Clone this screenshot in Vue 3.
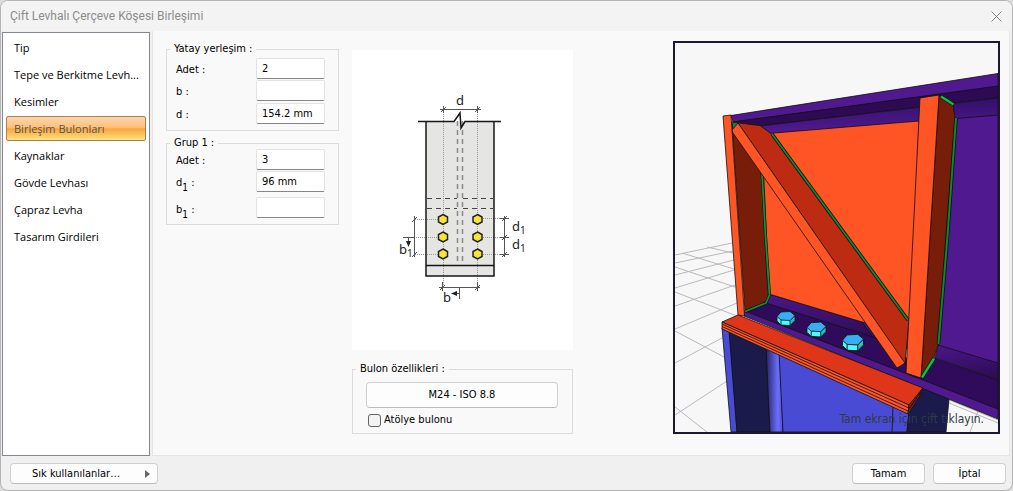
<script setup>
import { ref } from 'vue'

const pages = [
  'Tip',
  'Tepe ve Berkitme Levh...',
  'Kesimler',
  'Birleşim Bulonları',
  'Kaynaklar',
  'Gövde Levhası',
  'Çapraz Levha',
  'Tasarım Girdileri',
]
const current = ref(3)
const layout = ref({ count: '2', b: '', d: '154.2 mm' })
const group = ref({ count: '3', d1: '96 mm', b1: '' })
const shopBolt = ref(false)
const boltRows = [219.5, 237, 254]
const bolts = [[786, 318, 1], [816.5, 329, 1.06], [853, 342, 1.18]]
</script>

<template>
  <main class="dialog">
    <header class="titlebar">
      <h1>Çift Levhalı Çerçeve Köşesi Birleşimi</h1>
      <button class="close" type="button" aria-label="Kapat">
        <svg width="11" height="11" viewBox="0 0 11 11"><path d="M.5 .5L10.500 10.500M10.500 .5L.5 10.500" stroke="#858585" fill="none" /></svg>
      </button>
    </header>

    <div class="body">
      <nav class="pages">
        <button v-for="(p, i) in pages" :key="p" type="button" :class="{ active: i === current }" @click="current = i">{{ p }}</button>
      </nav>

      <section class="content">
        <div class="forms">
          <fieldset>
            <legend>Yatay yerleşim :</legend>
            <div class="row"><label for="h-count">Adet :</label><input id="h-count" v-model="layout.count" type="text" /></div>
            <div class="row"><label for="h-b">b :</label><input id="h-b" v-model="layout.b" type="text" /></div>
            <div class="row"><label for="h-d">d :</label><input id="h-d" v-model="layout.d" type="text" /></div>
          </fieldset>
          <fieldset class="group">
            <legend>Grup 1 :</legend>
            <div class="row"><label for="g-count">Adet :</label><input id="g-count" v-model="group.count" type="text" /></div>
            <div class="row"><label for="g-d1">d<sub>1</sub> :</label><input id="g-d1" v-model="group.d1" type="text" /></div>
            <div class="row"><label for="g-b1">b<sub>1</sub> :</label><input id="g-b1" v-model="group.b1" type="text" /></div>
          </fieldset>
        </div>

        <div class="middle">
          <svg class="diagram" viewBox="352 50 221 300">
            <rect x="426" y="122" width="68" height="154" fill="#e5e5e4" />
            <g fill="none" stroke="#999" stroke-dasharray="1 1">
              <path d="M443.500 112V286M477.500 112V286M415 219.500H440M408 237.500H440M415 254.500H440M481 218.500H502M481 237.500H502M481 254.500H502" />
            </g>
            <g fill="none" stroke="#888" stroke-dasharray="5 4">
              <path d="M457.500 121V265M462.500 121V265" stroke-width="1.500" />
              <path d="M427 198.500H457M463 198.500H493M427 208.500H457M463 208.500H493" stroke="#444" />
            </g>
            <g fill="none" stroke="#161616" stroke-width="1.500">
              <path d="M426 122V276H494V122M426 265.500H494" />
              <path d="M418 121.500H454L460 113L461 128L465 121.500H501" />
            </g>
            <g fill="none" stroke="#555">
              <path d="M440 109.500H481M443.500 106V113M477.500 106V113M441 112L446 107M475 112L480 107" />
              <path d="M442.500 282V291M477.500 282V291M439 287.500H480M440 290L445 285M475 290L480 285M459.500 287V299M452 293.500H460" />
              <path d="M414.500 216V257M412 222L417 217M412 257L417 252M403 237.500H414M408.500 238V243" />
              <path d="M504.500 216V257M502 221L507 216M502 240L507 235M502 257L507 252M500 218.500H509M500 237.500H509M500 254.500H509" />
            </g>
            <path d="M451 293.500L457 291V296ZM408.500 247L406 241H411Z" fill="#222" />
            <g fill="#fbe338" stroke="#222" stroke-width="1.500">
              <template v-for="y in boltRows" :key="y">
                <path v-for="x in [443, 477.5]" :key="x" :d="`M${x} ${y - 5}l4.500 2.500v5l-4.500 2.500l-4.500-2.500v-5z`" />
              </template>
            </g>
            <g class="dims">
              <text x="456" y="105">d</text>
              <text x="443" y="302">b</text>
              <text x="399" y="254">b<tspan class="small" dy="3">1</tspan></text>
              <text x="512" y="231">d<tspan class="small" dy="3">1</tspan></text>
              <text x="512" y="249">d<tspan class="small" dy="3">1</tspan></text>
            </g>
          </svg>

          <fieldset class="bolt">
            <legend>Bulon özellikleri :</legend>
            <button type="button">M24 - ISO 8.8</button>
            <label class="check"><input v-model="shopBolt" type="checkbox" />Atölye bulonu</label>
          </fieldset>
        </div>

        <figure class="scene">
          <svg viewBox="675 43 323 389" preserveAspectRatio="xMidYMid slice">
            <defs>
              <linearGradient id="flange" x1="0" y1="0" x2="0" y2="1"><stop offset="0" stop-color="#32106a" /><stop offset="1" stop-color="#511a92" /></linearGradient>
              <linearGradient id="fillet" x1="0" y1="0" x2="0.3" y2="1"><stop offset="0" stop-color="#4b178a" /><stop offset="1" stop-color="#300d5a" /></linearGradient>
              <linearGradient id="column"><stop offset="0" stop-color="#232365" /><stop offset=".7" stop-color="#6d6eff" /><stop offset="1" stop-color="#4b4bd4" /></linearGradient>
            </defs>
            <rect x="675" y="43" width="323" height="389" fill="#f7f7f7" />
            <g fill="none" stroke="#b9b9b9">
              <path d="M675 255L732 243M675 263L733 251M675 275L734 260M675 288L734 270M675 306L735 285M675 329L737 303M675 363L722 338M675 415L727 381" />
              <path d="M682 253L734 269M675 267L735 287M675 292L737 316M675 331L724 357M675 407L707 432M707 247L733 253" />
              <path d="M949 400L998 420M949 403L998 423M978 411L970 432" />
            </g>
            <g stroke="#101010" stroke-width=".8" stroke-linejoin="round">
              <path d="M722 328L730 332L737 432H731Z" fill="#4a4bd5" />
              <path d="M729 331L767 349L770 432H737Z" fill="#1a1a4b" />
              <path d="M766 347L780 354L783 432H770Z" fill="url(#column)" />
              <path d="M779 352L909 412L907 432H783Z" fill="#4a4bd5" />
              <path d="M893 406L892 432" />
              <path d="M909 412L923 387L949 399L946 432H907Z" fill="#1a1a4b" />

              <path d="M955 117L998 114V364L938 346Z" fill="#51198f" />
              <path d="M731 115.500L998 73.500V87L733 122Z" fill="#51198f" />
              <path d="M733 122L998 86V98L760 126Z" fill="#2e0a52" />
              <path d="M760 126L998 98V115L771 134Z" fill="url(#flange)" />

              <path d="M745 311L766 302L873 320L906 358L934 358L998 380V410Z" fill="#300b5b" />
              <path d="M769 294L862 322L885 328V341L873 337L766 303Z" fill="url(#fillet)" />
              <path d="M762 134L919 121L910 350L862 322L769 294Z" fill="#ff5524" />
              <path d="M862 322L890 331L896 345L873 337Z" fill="url(#fillet)" />
              <path d="M938 345L998 363V380L935 358Z" fill="url(#fillet)" />
              <path d="M744 311L998 409V419L744 316Z" fill="#51198f" />

              <path d="M732 124L762 170L768 297L765 302L745 311Z" fill="#781d0a" />
              <path d="M723 116L731 115L744.500 316L738 315Z" fill="#ff5524" />
              <path d="M732 122L739 123L733 130Z" fill="#0a8a2e" />
              <path d="M762 173L765.500 236L769.500 295L766 303L745 311.500" fill="none" stroke-width="3" />
              <path d="M762 173L765.500 236L769.500 295L766 303L745 311.500" fill="none" stroke="#0c9233" stroke-width="1.800" />

              <path d="M738 123L760 125.500L771 133.500L909 321L905 364Z" fill="#bd2c12" />
              <path d="M738 123L732 130L733 133L897 368L905 363Z" fill="#ff5524" />
              <path d="M772 134L908 320" fill="none" stroke-width="3.400" />
              <path d="M772 134L908 320" fill="none" stroke="#0a8a2e" stroke-width="1.800" />

              <path d="M939 95L953 104L955 118L946 236L938 345L934 358L921 378Z" fill="#781d0a" />
              <path d="M956 118L947.500 236L938.500 344" fill="none" stroke-width="3.600" />
              <path d="M956 118L947.500 236L938.500 344" fill="none" stroke="#0a8a2e" stroke-width="2" />
              <path d="M920 98L939 95L930 236L921 378L906 373L913 236Z" fill="#ff5524" />
              <path d="M941 96.500L953.500 104.500M934 358.500L922 377.500" fill="none" stroke-width="3.800" />
              <path d="M941 96.500L953.500 104.500M934 358.500L922 377.500" fill="none" stroke="#00c73d" stroke-width="2.400" />

              <path d="M738 315L722 322L909 405L923 388Z" fill="#df3518" />
              <path d="M722 322V329L908 414L909 405Z" fill="#ff5524" />
              <path d="M722 324L909 408M722 326.500L908 411" fill="none" />
              <path d="M909 405L923 388L921 394L908 414Z" fill="#9c2c13" />
              <path d="M909 408L922 390M908 411L921 392" fill="none" />

              <g v-for="[x, y, s] in bolts" :key="x" :transform="`translate(${x} ${y}) scale(${s})`">
                <path d="M-9 -1.500V3L-5 7L4 7.500L9 2.500V-2.500Z" fill="#4cf9fb" />
                <path d="M4 2.500V7.500L9 2.500V-2.500Z" fill="#2bb9c4" />
                <path d="M-9 -1.500L-5 -6L4 -6.500L9 -2.500L4 2.500L-5 2ZM-5 2V7" fill="#36aef6" />
              </g>
            </g>
          </svg>
          <figcaption>Tam ekran için çift tıklayın.</figcaption>
        </figure>
      </section>
    </div>

    <footer>
      <button class="favourites" type="button"><span>Sık kullanılanlar…</span><svg width="6" height="8" viewBox="0 0 6 8"><path d="M0 0L5 4L0 8Z" fill="#666" /></svg></button>
      <button type="button">Tamam</button>
      <button type="button">İptal</button>
    </footer>
  </main>
</template>

<style>
body { margin: 0; background: #dcdcdc; }
</style>

<style scoped>
* { box-sizing: border-box; }
.dialog {
  min-height: 100vh;
  display: flex;
  flex-direction: column;
  background: #f0f0f0;
  border: 1px solid #b4b4b4;
  border-radius: 8px;
  overflow: hidden;
  color: #000;
  font: 11px/16px Tahoma, "DejaVu Sans Condensed", "Noto Sans", sans-serif;
}
button, input { font: inherit; color: inherit; }
.titlebar {
  display: flex;
  justify-content: space-between;
  align-items: center;
  height: 30px;
  padding: 0 10px 0 9px;
  background: #f3f3f3;
}
h1 { margin: 0; font: 12px/16px Roboto, "Open Sans", sans-serif; color: #8c8c8c; }
.close { display: flex; padding: 0; border: 0; background: none; }
.body { flex: 1; display: flex; gap: 2px; padding-right: 2px; }
.pages {
  width: 148px;
  margin: 1px 0 0 1px;
  padding: 2px 3px;
  border: 1px solid #828790;
  background: #fff;
  font: 11px/16px "Open Sans", "Noto Sans", sans-serif;
}
.pages button {
  display: block;
  width: 100%;
  height: 25px;
  margin-bottom: 2px;
  padding: 0 7px;
  border: 1px solid transparent;
  border-radius: 2px;
  background: none;
  text-align: left;
  white-space: nowrap;
}
.pages .active {
  border-color: #a98252;
  color: #555;
  background: linear-gradient(#fbd5ae, #fdc078 45%, #f8a63e 52%, #fbc25a 75%, #fee287);
}
.content {
  flex: 1;
  display: flex;
  align-items: flex-start;
  padding: 10px 9px 0 13px;
  border: 1px solid #e5e5e5;
  border-top: 0;
  background: #f9f9f9;
}
.forms { width: 173px; margin-right: 13px; }
fieldset { margin: 0 0 4px; padding: 0 13px 5px 9px; border: 1px solid #dcdcdc; min-width: 0; }
legend { margin-left: -6px; padding: 0 4px; }
.row { display: flex; justify-content: space-between; align-items: center; height: 22px; }
.row:last-child { height: 24px; }
.row label { padding-top: 4px; }
.group { padding-bottom: 6px; }
.group legend { margin-bottom: -3px; }
.group .row:last-child { height: 26px; align-items: flex-end; }
sub { font-size: 10px; line-height: 0; vertical-align: -5px; }
.row input {
  width: 69px;
  height: 21px;
  padding: 0 5px;
  border: 1px solid #e3e3e3;
  border-bottom-color: #868686;
  border-radius: 2px;
  background: #fff;
}
.middle { width: 221px; margin-top: 9px; }
.diagram { display: block; width: 100%; background: #fff; margin-bottom: 11px; }
.dims { font: 13px "Noto Sans", sans-serif; fill: #222; }
.small { font-size: 10px; }
.bolt { padding: 0 14px 1px 13px; }
.bolt legend { margin-left: -10px; }
.bolt button { display: block; width: 100%; height: 26px; margin-top: 5px; }
.bolt button, footer button { border: 1px solid #d0d0d0; border-bottom-color: #bdbdbd; border-radius: 4px; background: #fdfdfd; }
.check { display: flex; align-items: center; gap: 3px; height: 24px; padding-left: 2px; }
.check input { appearance: none; width: 13px; height: 13px; margin: 0; border: 1px solid #626262; border-radius: 3px; background: #f3f3f3; }
.scene { position: relative; width: 327px; margin: 0 0 0 auto; border: 2px solid #1a1a2e; }
.scene svg { display: block; width: 100%; }
.scene figcaption { position: absolute; right: 14px; bottom: 5px; font: 12px/16px "DejaVu Sans Condensed", "Noto Sans", sans-serif; color: #2f3a42; }
footer { display: flex; gap: 8px; padding: 7px 6px 6px 9px; }
footer button { width: 73px; height: 21px; padding: 0; }
.favourites { display: flex; align-items: center; justify-content: space-between; width: 148px; padding: 0 6px 0 21px; margin-right: auto; }
</style>
